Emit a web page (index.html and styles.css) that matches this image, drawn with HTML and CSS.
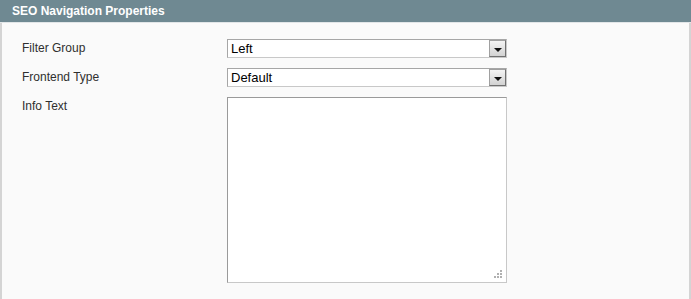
FILE: index.html
```html
<!DOCTYPE html>
<html>
<head>
<meta charset="utf-8">
<link rel="stylesheet" href="styles.css">
</head>
<body>
<div class="panel">
  <div class="head">SEO Navigation Properties</div>
  <div class="body">
    <div class="row">
      <label class="lbl">Filter Group</label>
      <div class="select"><span class="val">Left</span><span class="btn"><span class="tri"></span></span></div>
    </div>
    <div class="row">
      <label class="lbl">Frontend Type</label>
      <div class="select"><span class="val">Default</span><span class="btn"><span class="tri"></span></span></div>
    </div>
    <div class="row">
      <label class="lbl lbl-top">Info Text</label>
      <div class="ta-wrap">
        <textarea class="ta"></textarea>
        <svg class="grip" width="10" height="10" viewBox="0 0 10 10">
          <rect x="7" y="1" width="2" height="2" fill="#b0b0b0"/>
          <rect x="4" y="4" width="2" height="2" fill="#b0b0b0"/>
          <rect x="7" y="4" width="2" height="2" fill="#b0b0b0"/>
          <rect x="1" y="7" width="2" height="2" fill="#b0b0b0"/>
          <rect x="4" y="7" width="2" height="2" fill="#b0b0b0"/>
          <rect x="7" y="7" width="2" height="2" fill="#b0b0b0"/>
        </svg>
      </div>
    </div>
  </div>
</div>
</body>
</html>
```
FILE: styles.css
```css
html, body {
  margin: 0;
  padding: 0;
  background: #fafafa;
}
.panel {
  width: 691px;
  height: 299px;
  display: flex;
  flex-direction: column;
  font-family: "Liberation Sans", Arial, sans-serif;
  font-size: 12px;
  color: #2f2f2f;
}
.head {
  height: 22px;
  line-height: 22px;
  padding-left: 12px;
  background: #6f8992;
  color: #fff;
  font-weight: bold;
  border-bottom: 1px solid #e2e6e8;
}
.body {
  flex: 1;
  background: #fafafa;
  border-left: 2px solid #d4d4d4;
  border-right: 2px solid #d4d4d4;
  padding: 16px 0 0 20px;
  display: flex;
  flex-direction: column;
  gap: 10px;
}
.row {
  display: flex;
  align-items: flex-start;
}
.lbl {
  width: 205px;
  line-height: 19px;
}
.lbl-top {
  line-height: 18px;
}
.select {
  width: 278px;
  height: 17px;
  border: 1px solid #aaa;
  border-color: #a6a6a6 #c8c8c8 #c8c8c8 #a6a6a6;
  background: #fff;
  display: flex;
  align-items: center;
  color: #000;
  font-size: 13px;
}
.val {
  flex: 1;
  padding-left: 3px;
  line-height: 17px;
}
.btn {
  width: 15px;
  height: 15px;
  margin-right: 0;
  border: 1px solid #8a8a8a;
  border-color: #a0a0a0 #707070 #707070 #a0a0a0;
  background: linear-gradient(#f4f4f4, #d2d2d2);
  display: flex;
  align-items: center;
  justify-content: center;
}
.tri {
  width: 0;
  height: 0;
  border-left: 4px solid transparent;
  border-right: 4px solid transparent;
  border-top: 4px solid #111;
  margin-top: 2px;
}
.ta-wrap {
  position: relative;
  width: 280px;
  height: 186px;
}
.ta {
  box-sizing: border-box;
  width: 280px;
  height: 186px;
  margin: 0;
  border: 1px solid #b6b6b6;
  border-color: #9a9a9a #c8c8c8 #c8c8c8 #9a9a9a;
  background: #fff;
  resize: none;
  display: block;
  outline: none;
}
.grip {
  position: absolute;
  right: 4px;
  bottom: 4px;
}
```
